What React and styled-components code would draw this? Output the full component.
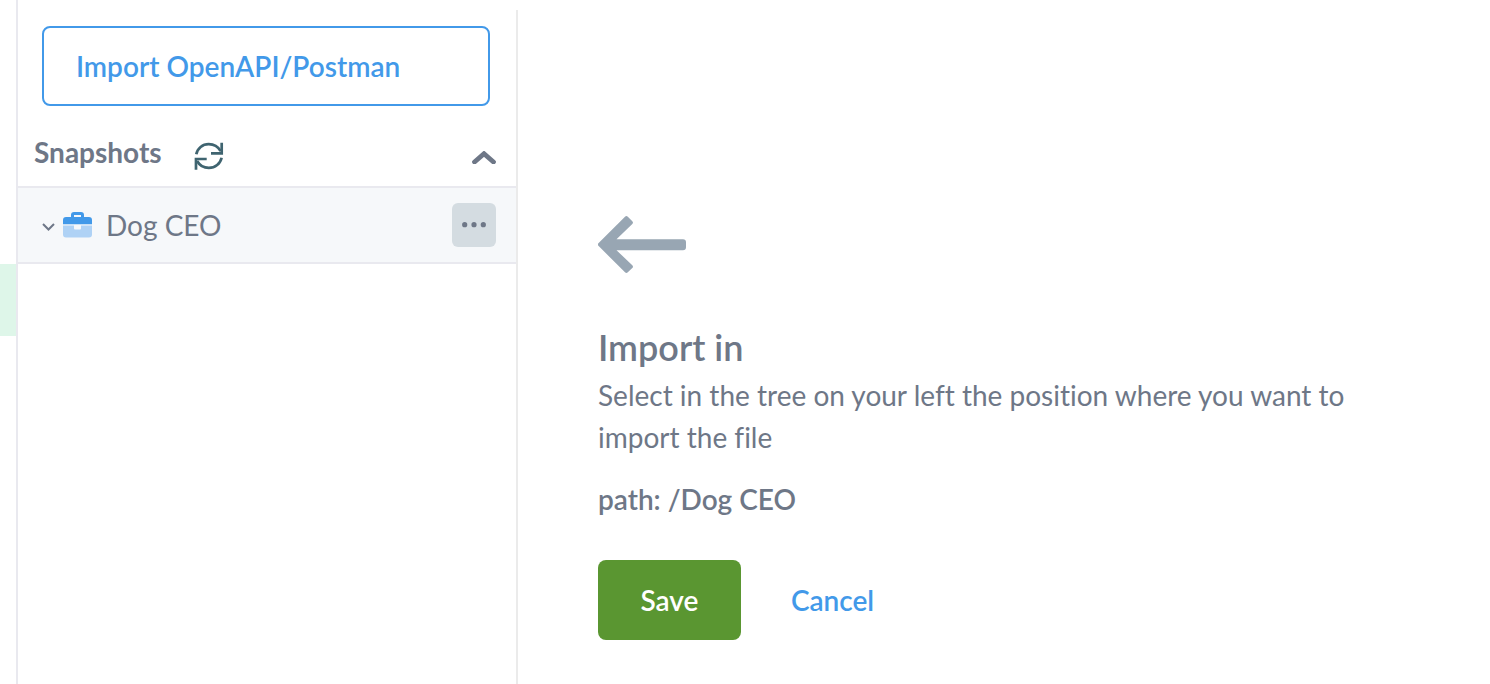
import React, { useState } from 'react';
import styled, { createGlobalStyle, ThemeProvider } from 'styled-components';

const theme = {
  palette: {
    primary: '#4299e9',
    primaryLight: '#afd2f5',
    success: '#5a9631',
    text: '#6e7787',
    muted: '#98a6b3',
    refresh: '#3f6470',
    line: '#e9e9ef',
    divider: '#ebebeb',
    row: '#f6f8fa',
    chip: '#d4dce1',
    mint: '#def6e9',
    white: '#ffffff',
  },
  typeface: "Lato, 'Open Sans', sans-serif",
};

const GlobalStyle = createGlobalStyle`
  * {
    box-sizing: border-box;
  }

  body {
    margin: 0;
    background-color: ${theme.palette.white};
    color: ${theme.palette.text};
    font: normal 400 28px/42px ${theme.typeface};
    font-variant-ligatures: none;
  }

  h1, h2, p, ul {
    margin: 0;
    padding: 0;
  }

  button {
    padding: 0;
    border: none;
    background-color: transparent;
    color: inherit;
    font: inherit;
    cursor: pointer;
  }

  svg {
    display: block;
  }
`;

const StyledPage = styled.div`
  display: flex;
  min-height: 100vh;
`;

const Rail = styled.div`
  flex: none;
  width: 16px;
  padding-top: 264px;
`;

const RailMarker = styled.div`
  height: 72px;
  background-color: ${props => props.theme.palette.mint};
`;

const Sidebar = styled.aside`
  flex: none;
  width: 500px;
  padding-top: 26px;
  border-left: 2px solid ${props => props.theme.palette.line};
`;

const ImportButton = styled.button`
  display: block;
  width: 448px;
  height: 80px;
  margin-left: 24px;
  padding: 0 32px;
  border: 2px solid ${props => props.theme.palette.primary};
  border-radius: 8px;
  color: ${props => props.theme.palette.primary};
  font-weight: 600;
  text-align: left;
`;

const SectionHeader = styled.div`
  display: flex;
  align-items: center;
  height: 82px;
  padding: 14px 20px 0 16px;
  border-bottom: 2px solid ${props => props.theme.palette.line};
`;

const SectionTitle = styled.h2`
  min-width: 136px;
  padding-bottom: 2px;
  font-size: 28px;
  font-weight: 700;
`;

const IconButton = styled.button`
  margin-left: ${props => (props.$end ? 'auto' : '24px')};
  padding-top: ${props => (props.$end ? '8px' : '6px')};
  color: ${props => props.theme.palette[props.$tone]};
`;

const Tree = styled.ul`
  list-style: none;
`;

const TreeItem = styled.li`
  display: flex;
  align-items: center;
  height: 76px;
  padding: 0 20px 0 24px;
  border-bottom: 2px solid ${props => props.theme.palette.line};
  background-color: ${props => props.theme.palette.row};
`;

const TreeLabel = styled.button`
  display: flex;
  align-items: center;
  flex: 1;
  text-align: left;

  .caret {
    margin-top: 4px;
  }

  .briefcase {
    margin: 0 14px 0 8px;
  }
`;

const MoreButton = styled.button`
  display: flex;
  justify-content: center;
  align-items: center;
  width: 44px;
  height: 44px;
  border-radius: 6px;
  background-color: ${props => props.theme.palette.chip};
`;

const Main = styled.main`
  flex: 1;
  margin-top: 10px;
  padding: 206px 80px 40px;
  border-left: 2px solid ${props => props.theme.palette.divider};
`;

const Title = styled.h1`
  margin: 49px 0 2px;
  font-size: 36px;
  font-weight: 600;
  line-height: 50px;
`;

const Description = styled.p`
  max-width: 800px;
`;

const Path = styled.p`
  margin-top: 20px;
  font-weight: 600;
`;

const Actions = styled.div`
  display: flex;
  gap: 48px;
  margin-top: 40px;
`;

const Button = styled.button`
  min-width: ${props => (props.$filled ? '143px' : '87px')};
  height: 80px;
  border-radius: 8px;
  background-color: ${props =>
    props.$filled ? props.theme.palette.success : 'transparent'};
  color: ${props =>
    props.$filled ? props.theme.palette.white : props.theme.palette.primary};
  font-weight: 600;
`;

const RefreshIcon = () => (
  <svg width="30" height="28" viewBox="0 0 30 28" fill="none" stroke="currentColor" strokeWidth="2.7">
    <path d="M2.3 12.3C3.500 6.300 8.500 2.200 14.700 2.200c5 0 9.400 2.500 11.900 7" />
    <path d="M27.700 0.800v10.600H17" />
    <path d="M27.600 15.700c-1.200 5.900-6.400 10.200-12.800 10.200-5 0-9.300-2.600-11.700-6.900" />
    <path d="M2 27.800V17h10.700" />
  </svg>
);

const CollapseIcon = () => (
  <svg width="24" height="13" viewBox="0 0 24 13" fill="none" stroke="currentColor" strokeWidth="4.800" strokeLinecap="round">
    <path d="M2.500 11L12 2.700L21.500 11" />
  </svg>
);

const CaretIcon = () => (
  <svg className="caret" width="13" height="8" viewBox="0 0 13 8" fill="none" stroke="currentColor" strokeWidth="2">
    <path d="M1 1l5.500 5.500L12 1" />
  </svg>
);

const BriefcaseIcon = () => (
  <svg className="briefcase" width="29" height="26" viewBox="0 0 29 26">
    <path
      fill={theme.palette.primary}
      fillRule="evenodd"
      d="M3 5h5V3a3 3 0 0 1 3-3h7a3 3 0 0 1 3 3v2h5a3 3 0 0 1 3 3v4.300H0V8a3 3 0 0 1 3-3zm8 0h7V3h-7z"
    />
    <path
      fill={theme.palette.primaryLight}
      d="M0 13.500h11v3a1 1 0 0 0 1 1h5a1 1 0 0 0 1-1v-3h11V22.500a3 3 0 0 1-3 3H3a3 3 0 0 1-3-3z"
    />
  </svg>
);

const DotsIcon = () => (
  <svg width="24" height="6" viewBox="0 0 24 6" fill="currentColor">
    <circle cx="2.700" cy="2.700" r="2.600" />
    <circle cx="12" cy="2.700" r="2.600" />
    <circle cx="21.300" cy="2.700" r="2.600" />
  </svg>
);

const ArrowIcon = () => (
  <svg width="88" height="57" viewBox="0 0 88 57" fill={theme.palette.muted}>
    <path d="M0.400 27.200L27 0.800a2 2 0 0 1 2.800 0L34.300 5.200a2 2 0 0 1 0 2.800L18.500 23.200H85a3 3 0 0 1 3 3v5a3 3 0 0 1-3 3H18.500L34.300 49.300a2 2 0 0 1 0 2.800L29.800 56.300a2 2 0 0 1-2.800 0L0.400 29.800a1.800 1.800 0 0 1 0-2.600z" />
  </svg>
);

function App() {
  const [open, setOpen] = useState(true);

  return (
    <ThemeProvider theme={theme}>
      <GlobalStyle />
      <StyledPage>
        <Rail>
          <RailMarker />
        </Rail>
        <Sidebar>
          <ImportButton type="button">Import OpenAPI/Postman</ImportButton>
          <SectionHeader>
            <SectionTitle>Snapshots</SectionTitle>
            <IconButton type="button" $tone="refresh" aria-label="Refresh">
              <RefreshIcon />
            </IconButton>
            <IconButton
              type="button"
              $end
              $tone="text"
              aria-label="Toggle snapshots"
              aria-expanded={open}
              onClick={() => setOpen(!open)}
            >
              <CollapseIcon />
            </IconButton>
          </SectionHeader>
          {open && (
            <Tree>
              <TreeItem>
                <TreeLabel type="button">
                  <CaretIcon />
                  <BriefcaseIcon />
                  Dog CEO
                </TreeLabel>
                <MoreButton type="button" aria-label="More">
                  <DotsIcon />
                </MoreButton>
              </TreeItem>
            </Tree>
          )}
        </Sidebar>
        <Main>
          <ArrowIcon />
          <Title>Import in</Title>
          <Description>
            Select in the tree on your left the position where you want to
            import the file
          </Description>
          <Path>path: /Dog CEO</Path>
          <Actions>
            <Button type="button" $filled>
              Save
            </Button>
            <Button type="button">Cancel</Button>
          </Actions>
        </Main>
      </StyledPage>
    </ThemeProvider>
  );
}

export default App;
